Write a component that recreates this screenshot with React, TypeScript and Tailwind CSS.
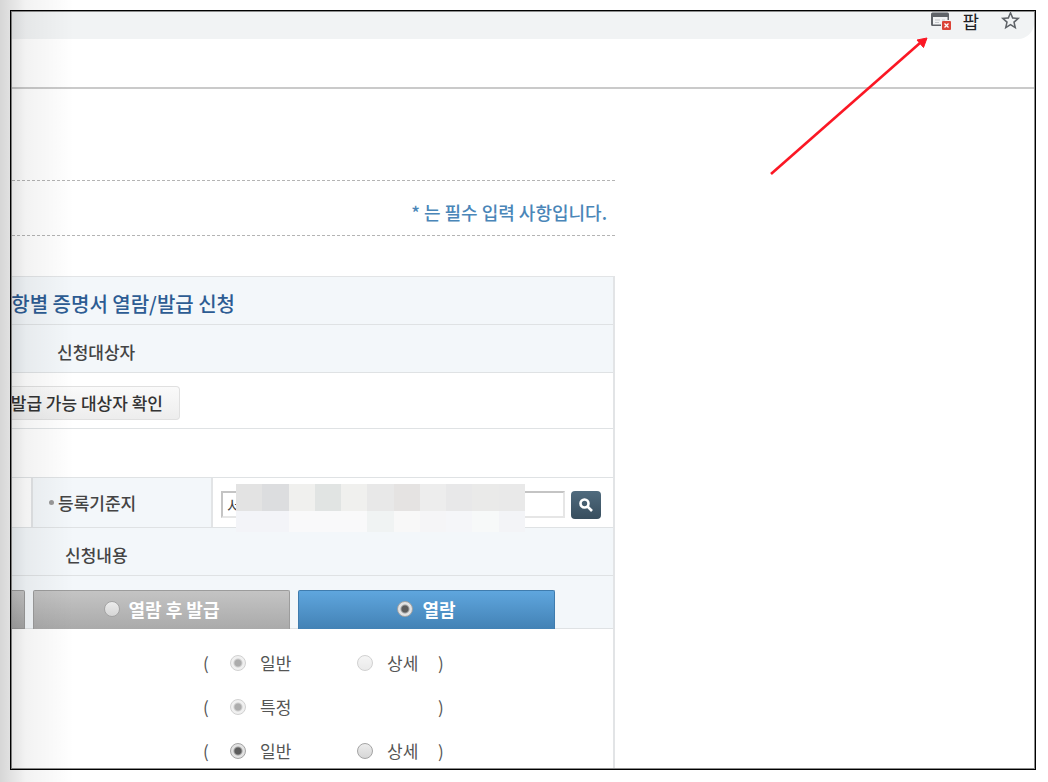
import { useState } from 'react';

const pixels = [
  ['bg-[#e3e3e3]', 'bg-[#f3f4f8]'],
  ['bg-[#dcdddf]', 'bg-[#f3f4f8]'],
  ['bg-[#f0f0ee]', 'bg-[#f9f9fa]'],
  ['bg-[#e1e4e3]', 'bg-[#f9f9fa]'],
  ['bg-[#f0f0ee]', 'bg-[#f9f9fa]'],
  ['bg-[#e8e8e8]', 'bg-[#f0f3f3]'],
  ['bg-[#e5e3e2]', 'bg-[#f8f8f8]'],
  ['bg-[#ededed]', 'bg-[#f5f5f7]'],
  ['bg-[#e8e8e9]', 'bg-[#f5f6f9]'],
  ['bg-[#eaeae9]', 'bg-[#f7f9f9]'],
  ['bg-[#e9e9e9]', 'bg-[#f3f4f7]'],
];

const options = [
  { id: 'basic', first: '일반', second: '상세', disabled: true },
  { id: 'special', first: '특정', second: '', disabled: true },
  { id: 'family', first: '일반', second: '상세', disabled: false },
];

const radio =
  'appearance-none shrink-0 size-4 rounded-full border border-[#a4a4a4] bg-linear-to-b from-[#ececec] to-[#d6d6d6] checked:bg-[radial-gradient(circle,#5c5c5c_0_3px,#e2e2e2_5px)] disabled:opacity-50';

function Toolbar() {
  return (
    <div className="h-[27px] bg-[#f1f3f4] rounded-br-[16px] flex items-center justify-end pr-3 pb-[10px] overflow-hidden">
      <button aria-label="팝업" className="flex items-center">
        <svg width="21" height="18" viewBox="0 0 21 18" fill="none">
          <path d="M1.500 0.500h15A1.500 1.500 0 0 1 18 2v6h-1.500V5H2v7.500h8V14H1.500A1.500 1.500 0 0 1 0 12.500V2A1.500 1.500 0 0 1 1.500 0.500Z" fill="#5f6368" />
          <path d="M4 8h5M4 10.500h4M11 8h3" stroke="#c4c7ca" />
          <rect x="11" y="9" width="9" height="9" rx="1" fill="#db4437" />
          <path d="m13.500 11.500 4 4m0-4-4 4" stroke="#fff" strokeWidth="1.300" />
        </svg>
        <span className="ml-[10px] text-[18px] leading-[20px] text-[#202124]">팝</span>
      </button>
      <button aria-label="★" className="ml-5">
        <svg width="23" height="23" viewBox="0 0 24 24" fill="#5f6368">
          <path d="M22 9.240l-7.190-.620L12 2 9.190 8.630 2 9.240l5.460 4.730L5.820 21 12 17.270 18.180 21l-1.630-7.030L22 9.240zM12 15.400l-3.760 2.270 1-4.280-3.320-2.880 4.380-.380L12 6.100l1.710 4.040 4.380.380-3.320 2.880 1 4.280L12 15.400z" />
        </svg>
      </button>
    </div>
  );
}

export default function App() {
  const [tab, setTab] = useState('view');
  const [address, setAddress] = useState('서');

  return (
    <div
      className="relative min-h-screen flex bg-white pt-[10px] pl-[10px] pr-3 pb-3 text-[17px] leading-6 text-[#444]"
      style={{ fontFamily: '"Noto Sans CJK KR", sans-serif' }}
    >
      <div className="relative flex-1 min-w-0 flex border border-black overflow-hidden">
        <div className="flex-1 min-w-0 flex flex-col border border-[#8c8c8c]">
          <Toolbar />
          <div className="h-[50px] border-b-2 border-[#cacaca]" />

          <main className="w-full max-w-[603px] pt-[91px] flex-1 flex flex-col">
            <p className="h-[56px] flex items-center justify-end border-y border-dashed border-[#b4b4b4] pt-3 pb-1 pr-2 text-[18px] text-[#4a86b8] font-medium">
              * 는 필수 입력 사항입니다.
            </p>

            <form className="mt-10 flex-1 flex flex-col border-t border-r-2 border-[#e2e4e6]" onSubmit={e => e.preventDefault()}>
              <div className="h-12 flex items-center bg-[#f3f7fa] border-b border-[#dfe2e4] pt-1.5">
                <h2 className="w-[223px] flex justify-end overflow-hidden whitespace-nowrap text-[20px] font-medium text-[#2d5c93]">항별 증명서 열람/발급 신청</h2>
              </div>
              <h3 className="h-12 flex items-center bg-[#f3f7fa] border-b border-[#dfe2e4] pt-1.5 pl-[45px] font-medium">신청대상자</h3>
              <div className="h-14 flex items-center border-b border-[#dfe2e4] pt-1">
                <button type="button" className="h-[34px] w-[168px] flex items-center justify-end overflow-hidden whitespace-nowrap pr-4 rounded-r-[4px] border border-l-0 border-[#e0e0e0] bg-linear-to-b from-[#fafafa] to-[#ededed] font-medium text-[#333]">
                  발급 가능 대상자 확인
                </button>
              </div>
              <div className="h-[49px] border-b border-[#dfe2e4]" />

              <div className="h-[50px] flex border-b border-[#dfe2e4]">
                <div className="w-[21px] border-r-2 border-[#e2e4e6]" />
                <label htmlFor="address" className="w-[180px] flex items-center gap-1 bg-[#f3f7fa] border-r-2 border-[#e2e4e6] pl-4 font-medium">
                  <span className="size-[5px] rounded-full bg-[#999]" />
                  등록기준지
                </label>
                <div className="relative flex-1 flex items-center gap-[6px] pl-2 pr-3 pt-1">
                  <input
                    id="address"
                    value={address}
                    onChange={e => setAddress(e.target.value)}
                    className="min-w-0 flex-1 h-[27px] border-2 border-[#e6e6e6] border-t-[#c4c4c4] border-l-[#c4c4c4] px-1 bg-white text-[16px] outline-none"
                  />
                  <button type="button" aria-label="검색" className="h-7 w-[30px] flex items-center justify-center rounded-[4px] bg-linear-to-b from-[#506b7e] to-[#384e5e]">
                    <svg width="16" height="16" viewBox="0 0 16 16" fill="none" stroke="#fff">
                      <circle cx="6.500" cy="6.500" r="4" strokeWidth="2.600" />
                      <path d="m9.500 9.500 4.500 4.500" strokeWidth="2.600" />
                    </svg>
                  </button>
                  {/* blurred-out address */}
                  <div className="absolute left-[23px] right-[88px] top-[6px] flex">
                    {pixels.map(([top, bottom], i) => (
                      <div key={i} className="flex-1">
                        <div className={`h-[27px] ${top}`} />
                        <div className={`h-[21px] ${bottom}`} />
                      </div>
                    ))}
                  </div>
                </div>
              </div>

              <h3 className="h-12 flex items-center bg-[#f3f7fa] border-b border-[#dfe2e4] pt-1.5 pl-[53px] font-medium">신청내용</h3>

              <div className="h-[53px] flex items-end gap-2 bg-[#f3f7fa] border-b border-[#dfe2e4] text-[18px] text-white font-bold">
                <div className="-mb-px h-[39px] w-[13px] border border-l-0 border-[#999] rounded-tr-[2px] bg-linear-to-b from-[#c4c4c4] to-[#a6a6a6]" />
                <label className="-mb-px h-[39px] w-[257px] flex items-center justify-center gap-[9px] pb-0.5 border border-b-0 border-[#9c9c9c] rounded-t-[2px] bg-linear-to-b from-[#c4c4c4] to-[#aaaaaa]">
                  <input type="radio" name="tab" checked={tab === 'issue'} onChange={() => setTab('issue')} className={radio} />
                  열람 후 발급
                </label>
                <label className="-mb-px h-[39px] w-[257px] flex items-center justify-center gap-[9px] pb-0.5 border border-b-0 border-[#3f7cae] rounded-t-[2px] bg-linear-to-b from-[#5fa6de] to-[#4382b5]">
                  <input type="radio" name="tab" checked={tab === 'view'} onChange={() => setTab('view')} className={radio} />
                  열람
                </label>
              </div>

              <div className="pt-[22px] flex flex-col gap-5 text-[#555]">
                {options.map(o => (
                  <div key={o.id} className="h-6 flex items-center pl-[191px]">
                    <span className="w-[27px]">(</span>
                    <label className="w-[127px] flex items-center gap-[14px]">
                      <input type="radio" name={o.id} defaultChecked disabled={o.disabled} className={radio} />
                      {o.first}
                    </label>
                    <div className="w-[81px]">
                      {o.second && (
                        <label className="flex items-center gap-[14px]">
                          <input type="radio" name={o.id} disabled={o.disabled} className={radio} />
                          {o.second}
                        </label>
                      )}
                    </div>
                    <span>)</span>
                  </div>
                ))}
              </div>
            </form>
          </main>
        </div>
      </div>

      <div className="absolute inset-y-0 left-0 w-[74px] pointer-events-none bg-linear-to-r from-black/16 via-black/5 via-35% to-transparent" />

      <svg className="absolute top-[34px] right-[116px] pointer-events-none" width="166" height="144" viewBox="0 0 166 144">
        <path d="M5 140 154 9" stroke="#fb1724" strokeWidth="2.600" />
        <path d="M161 4 151 6l6.500 7.500Z" fill="#fb1724" stroke="#fb1724" />
      </svg>
    </div>
  );
}
